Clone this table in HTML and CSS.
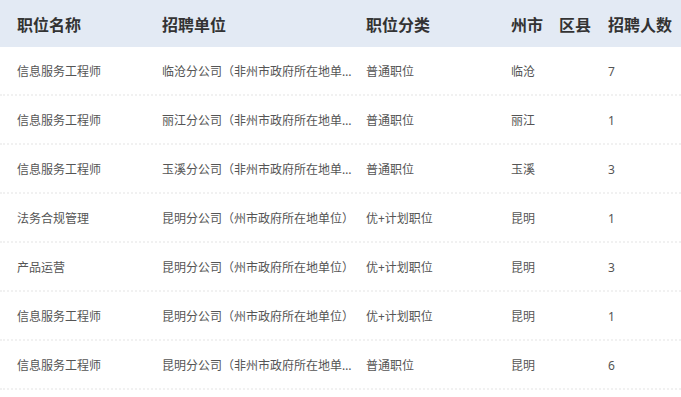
FILE: index.html
```html
<!DOCTYPE html>
<html lang="zh-CN">
<head>
<meta charset="utf-8">
<link rel="stylesheet" href="styles.css">
</head>
<body>
<div class="table">
  <div class="row head">
    <div class="cell">职位名称</div>
    <div class="cell">招聘单位</div>
    <div class="cell">职位分类</div>
    <div class="cell">州市</div>
    <div class="cell">区县</div>
    <div class="cell">招聘人数</div>
  </div>
  <div class="row">
    <div class="cell">信息服务工程师</div>
    <div class="cell unit">临沧分公司（非州市政府所在地单位）</div>
    <div class="cell">普通职位</div>
    <div class="cell">临沧</div>
    <div class="cell"></div>
    <div class="cell">7</div>
  </div>
  <div class="row">
    <div class="cell">信息服务工程师</div>
    <div class="cell unit">丽江分公司（非州市政府所在地单位）</div>
    <div class="cell">普通职位</div>
    <div class="cell">丽江</div>
    <div class="cell"></div>
    <div class="cell">1</div>
  </div>
  <div class="row">
    <div class="cell">信息服务工程师</div>
    <div class="cell unit">玉溪分公司（非州市政府所在地单位）</div>
    <div class="cell">普通职位</div>
    <div class="cell">玉溪</div>
    <div class="cell"></div>
    <div class="cell">3</div>
  </div>
  <div class="row">
    <div class="cell">法务合规管理</div>
    <div class="cell unit">昆明分公司（州市政府所在地单位）</div>
    <div class="cell">优+计划职位</div>
    <div class="cell">昆明</div>
    <div class="cell"></div>
    <div class="cell">1</div>
  </div>
  <div class="row">
    <div class="cell">产品运营</div>
    <div class="cell unit">昆明分公司（州市政府所在地单位）</div>
    <div class="cell">优+计划职位</div>
    <div class="cell">昆明</div>
    <div class="cell"></div>
    <div class="cell">3</div>
  </div>
  <div class="row">
    <div class="cell">信息服务工程师</div>
    <div class="cell unit">昆明分公司（州市政府所在地单位）</div>
    <div class="cell">优+计划职位</div>
    <div class="cell">昆明</div>
    <div class="cell"></div>
    <div class="cell">1</div>
  </div>
  <div class="row">
    <div class="cell">信息服务工程师</div>
    <div class="cell unit">昆明分公司（非州市政府所在地单位）</div>
    <div class="cell">普通职位</div>
    <div class="cell">昆明</div>
    <div class="cell"></div>
    <div class="cell">6</div>
  </div>
</div>
</body>
</html>
```

FILE: styles.css
```css
html, body {
  margin: 0;
  padding: 0;
  background: #ffffff;
}
body {
  font-family: "Noto Sans", "Noto Sans CJK SC", sans-serif;
  color: #555555;
}
.table {
  width: 681px;
}
.row {
  display: grid;
  grid-template-columns: 145px 204px 145px 48px 49px 1fr;
  padding-left: 17px;
  padding-top: 1px;
  height: 46px;
  align-items: center;
  font-size: 12px;
  border-bottom: 2px dotted #f1f1f1;
}
.row.head {
  padding-top: 0;
  height: 47px;
  background: #e3eaf4;
  border-bottom: none;
  font-size: 16px;
  font-weight: bold;
  color: #333333;
}
.cell {
  white-space: nowrap;
}
.unit {
  overflow: hidden;
  text-overflow: ellipsis;
  padding-right: 10px;
}
```
